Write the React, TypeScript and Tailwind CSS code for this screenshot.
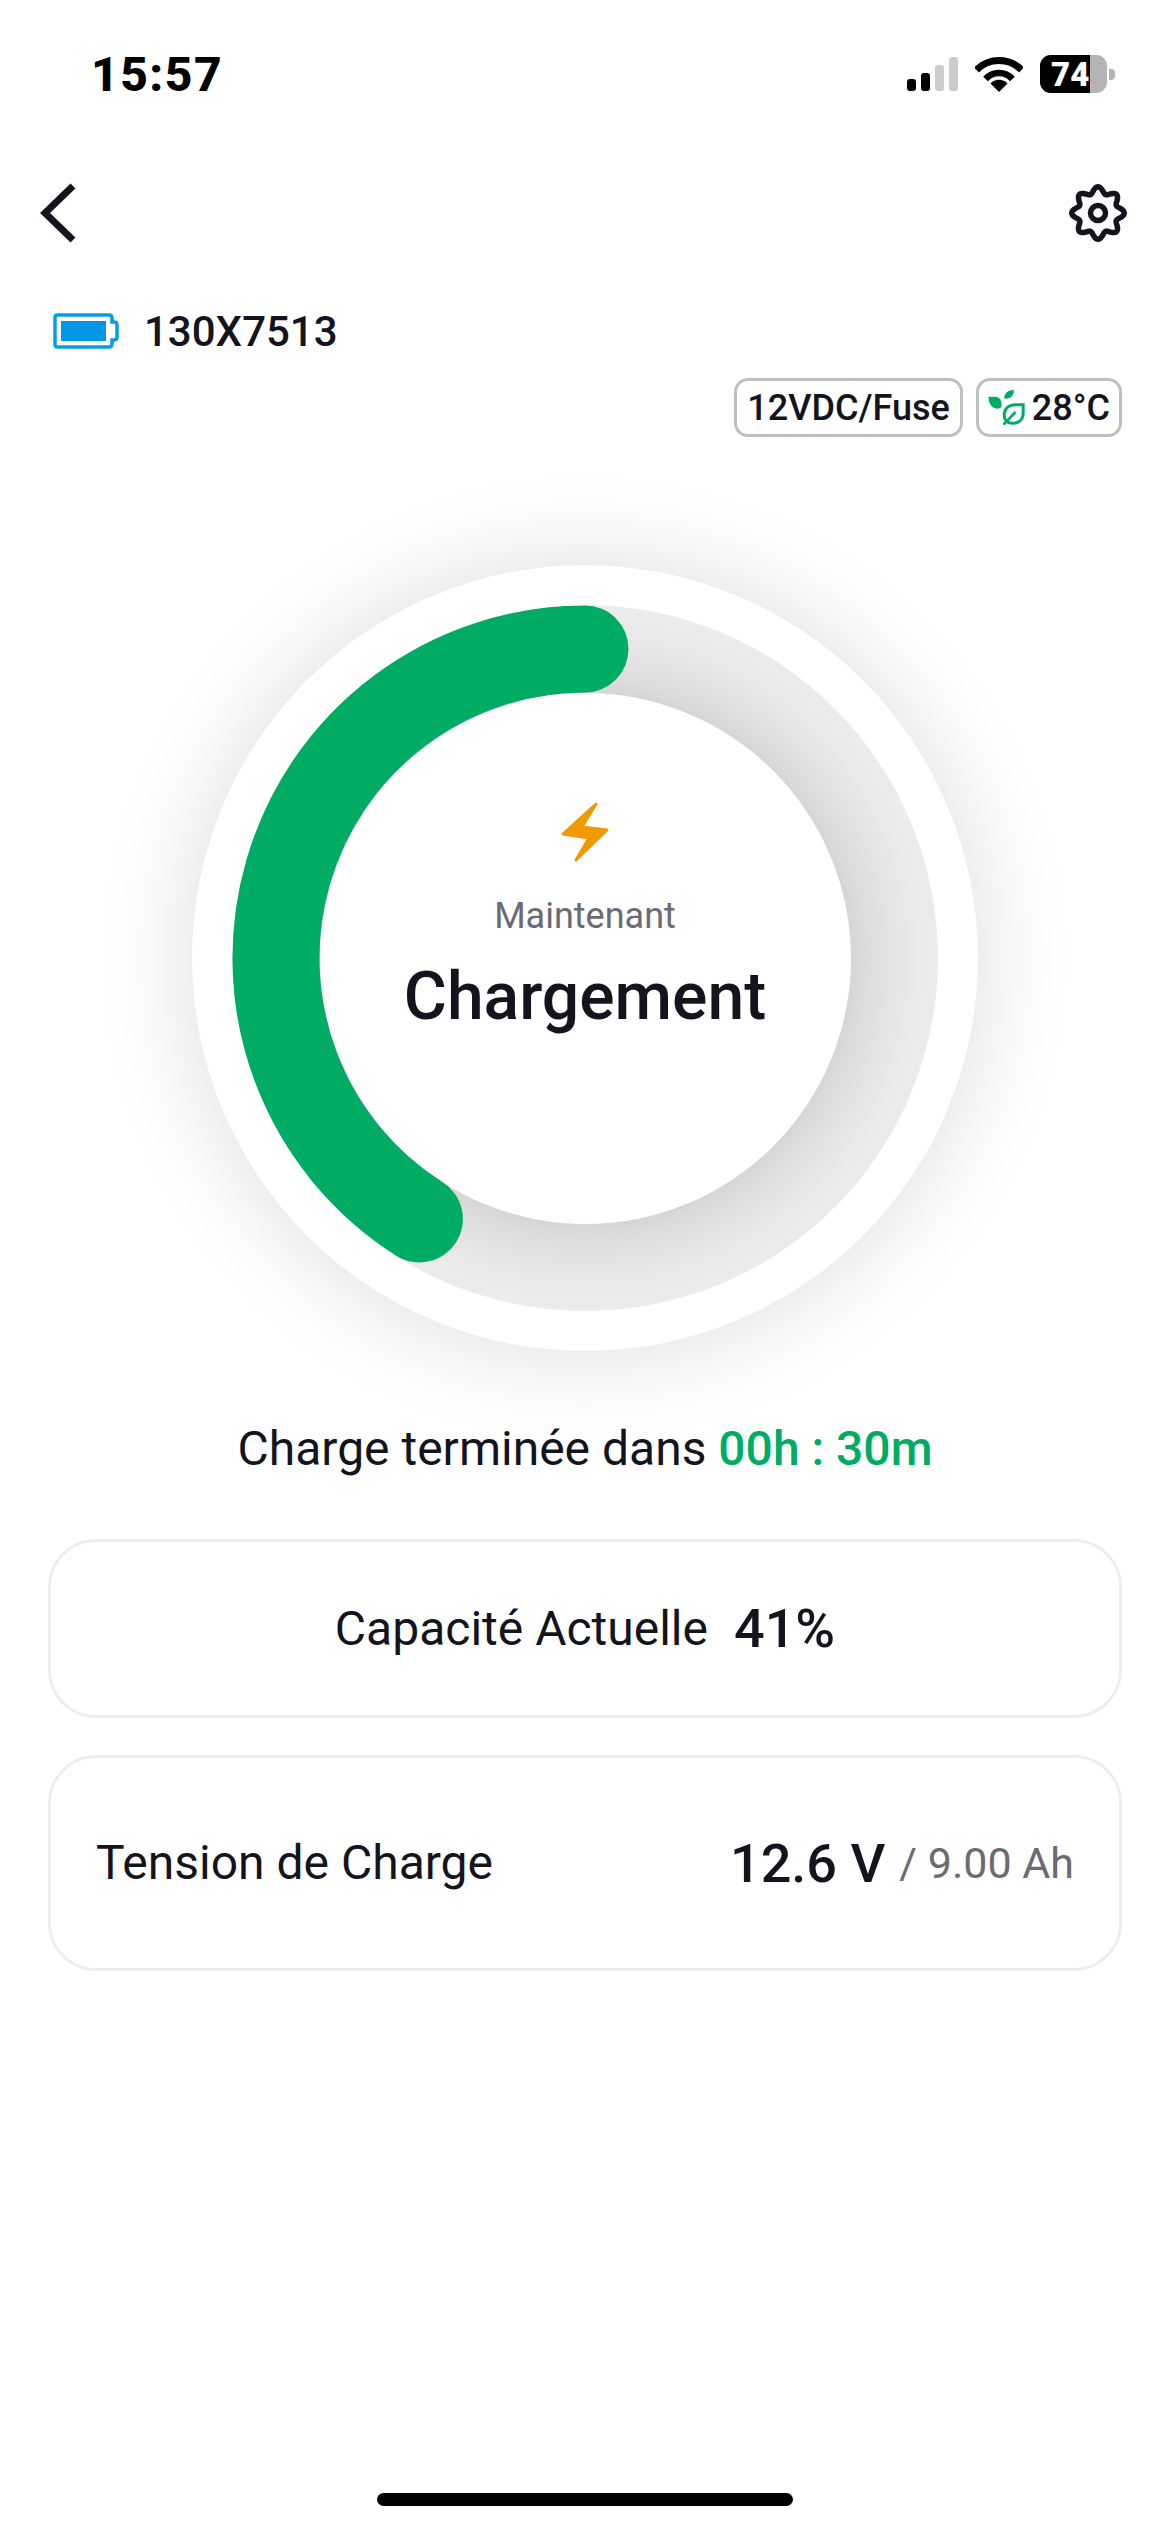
import React from "react";

function SignalBars() {
    return (
        <div className="flex items-end gap-[5px] h-[34px]">
            <div className="w-[9px] h-[12px] rounded-[3px] bg-black" />
            <div className="w-[9px] h-[18px] rounded-[3px] bg-black" />
            <div className="w-[9px] h-[26px] rounded-[3px] bg-[#cccccc]" />
            <div className="w-[9px] h-[34px] rounded-[3px] bg-[#cccccc]" />
        </div>
    );
}

function WifiIcon() {
    return (
        <svg width="48" height="36" viewBox="0 0 48 36" fill="none">
            <path d="M1.500 14 A31.500 31.500 0 0 1 46.500 14" stroke="#000" strokeWidth="7" />
            <path d="M10.600 23 A18 18 0 0 1 37.400 23" stroke="#000" strokeWidth="6.500" />
            <path d="M15.500 27.500 A11.500 11.500 0 0 1 32.500 27.500 L24 36 Z" fill="#000" />
        </svg>
    );
}

function StatusBattery() {
    return (
        <div className="flex items-center gap-[2px]">
            <div className="relative w-[67px] h-[38px] rounded-[11px] bg-[#b4b4b4] overflow-hidden flex items-center pl-[11px]">
                <div className="absolute left-0 top-0 bottom-0 w-[50px] bg-black" />
                <span className="relative text-white font-black text-[33px] leading-none">74</span>
            </div>
            <div className="w-[6px] h-[11px] rounded-r-[4px] bg-[#b4b4b4]" />
        </div>
    );
}

function DeviceBattery() {
    return (
        <svg width="66" height="36" viewBox="0 0 66 36" fill="none">
            <path d="M4 2 H56 Q59 2 59 5 V9 H61 Q64 9 64 12 V24 Q64 27 61 27 H59 V31 Q59 34 56 34 H4 Q2 34 2 31 V5 Q2 2 4 2 Z" stroke="#0a9be6" strokeWidth="3.500" />
            <rect x="8" y="8" width="45" height="20" fill="#0098e6" />
        </svg>
    );
}

function LeafIcon() {
    return (
        <svg width="37" height="35" viewBox="0 0 110 105" fill="none">
            <path d="M1 20 H22 C34 20 42 30 40 52 L30 56 C12 56 1 42 1 20 Z" fill="#00ac64" />
            <path d="M77 0 C78 14 70 26 52 26 L48 25 C48 10 60 0 77 0 Z" fill="#00ac64" />
            <path d="M105 44 V70 C105 90 90 100 72 100 C56 100 48 88 48 76 C48 56 62 44 84 44 Z" stroke="#00ac64" strokeWidth="9" />
            <path d="M46 104 L82 66" stroke="#00ac64" strokeWidth="8" />
        </svg>
    );
}

function gearPath() {
    const pts: string[] = [];
    for (let i = 0; i < 240; i++) {
        const a = (i / 240) * Math.PI * 2;
        const r = 23 + 3.2 * Math.cos(8 * a);
        pts.push(`${(30 + r * Math.sin(a)).toFixed(2)} ${(30 - r * Math.cos(a)).toFixed(2)}`);
    }
    return "M" + pts.join(" L") + " Z";
}

function GearIcon() {
    return (
        <svg width="60" height="60" viewBox="0 0 60 60" fill="none">
            <path d={gearPath()} stroke="#14141e" strokeWidth="5.500" strokeLinejoin="round" />
            <circle cx="30" cy="30" r="7.500" stroke="#14141e" strokeWidth="5.500" />
        </svg>
    );
}

function Bolt() {
    return (
        <svg width="50" height="62" viewBox="-1 -1 50 62" fill="none">
            <path d="M35 2 L21 25 L46 28 L15 58 L28 36 L2 32 Z" fill="#f09a00" stroke="#f09a00" strokeWidth="3" strokeLinejoin="round" />
        </svg>
    );
}

// 41% arc, counter-clockwise from the top
function Gauge() {
    return (
        <div className="w-[786px] h-[786px] rounded-full bg-white shadow-[0_0_100px_rgba(0,0,0,0.14)] flex items-center justify-center">
            <div className="relative w-[706px] h-[706px] rounded-full bg-[#ececec] overflow-hidden flex items-center justify-center">
                <div className="w-[531px] h-[531px] rounded-full bg-white shadow-[0_0_90px_rgba(0,0,0,0.2)] flex flex-col items-center pt-[108px]">
                    <Bolt />
                    <div className="mt-[31px] text-[36px] leading-[44px] text-[#6b6b73]">Maintenant</div>
                    <div className="mt-[21px] text-[66px] leading-[76px] font-medium text-[#14141e]">Chargement</div>
                </div>
                <svg className="absolute inset-0" width="706" height="706" viewBox="0 0 706 706" fill="none">
                    <path d="M353 44 A309 309 0 0 0 187.400 613.900" stroke="#00ac64" strokeWidth="87" strokeLinecap="round" />
                </svg>
            </div>
        </div>
    );
}

export default function App() {
    return (
        <div className="w-[1170px] h-[2532px] bg-white flex flex-col text-[#14141e] font-['Roboto',sans-serif]">
            <div className="flex items-center justify-between h-[38px] mt-[55px] pl-[91px] pr-[55px]">
                <span className="pt-[2px] text-[48px] leading-none font-extrabold text-black tracking-[1.5px]">15:57</span>
                <div className="flex items-center gap-[17px]">
                    <SignalBars />
                    <WifiIcon />
                    <StatusBattery />
                </div>
            </div>

            <div className="flex items-center justify-between h-[60px] mt-[90px] pl-[40px] pr-[42px]">
                <svg width="36" height="60" viewBox="0 0 36 60" fill="none">
                    <path d="M33 3 L5 30 L33 57" stroke="#14141e" strokeWidth="7" />
                </svg>
                <GearIcon />
            </div>

            <div className="flex items-center gap-[25px] h-[36px] mt-[70px] pl-[53px]">
                <DeviceBattery />
                <span className="pt-[2px] text-[42px] leading-none font-medium">130X7513</span>
            </div>

            <div className="flex justify-end gap-[13px] mt-[29px] pr-[48px]">
                <div className="h-[59px] px-[10px] flex items-center rounded-[14px] border-[3px] border-[#bfbfbf] text-[36px] font-medium leading-none">12VDC/Fuse</div>
                <div className="h-[59px] pl-[9px] pr-[9px] flex items-center gap-[7px] rounded-[14px] border-[3px] border-[#bfbfbf] text-[36px] font-medium leading-none">
                    <LeafIcon />
                    28°C
                </div>
            </div>

            <div className="flex justify-center mt-[128px]">
                <Gauge />
            </div>

            <div className="mt-[70px] text-center text-[48px] leading-[56px]">
                Charge terminée dans <span className="font-medium text-[#00ac64]">00h : 30m</span>
            </div>

            <div className="mx-[48px] mt-[62px] h-[179px] rounded-[48px] border-[3px] border-[#eeeef0] flex items-center justify-center gap-[26px]">
                <span className="text-[48px]">Capacité Actuelle</span>
                <span className="text-[54px] font-medium">41%</span>
            </div>

            <div className="mx-[48px] mt-[37px] h-[216px] rounded-[48px] border-[3px] border-[#eeeef0] flex items-center justify-between pl-[45px] pr-[45px]">
                <span className="text-[48px]">Tension de Charge</span>
                <div className="flex items-center gap-[14px]">
                    <span className="text-[54px] font-medium">12.6 V</span>
                    <span className="text-[43px] text-[#6b6b73]">/ 9.00 Ah</span>
                </div>
            </div>

            <div className="mt-auto mb-[26px] mx-auto w-[416px] h-[13px] rounded-full bg-black" />
        </div>
    );
}
